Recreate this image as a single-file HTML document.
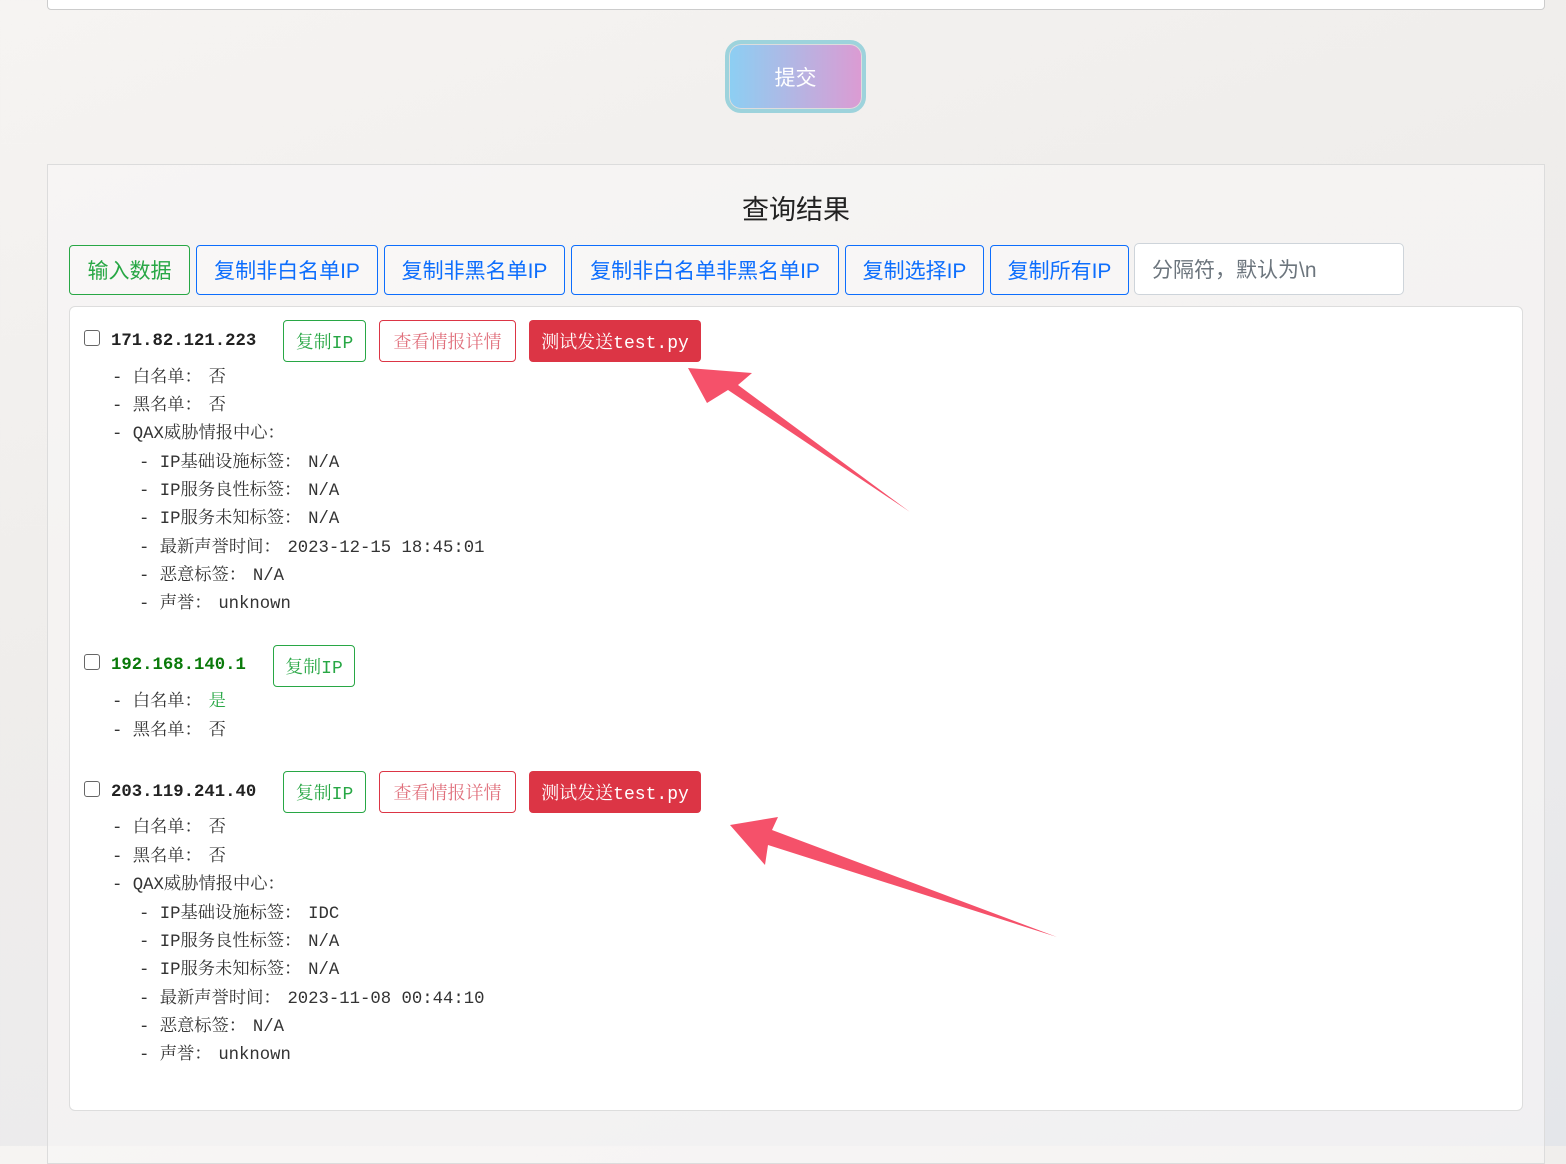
<!DOCTYPE html>
<html><head><meta charset="utf-8"><style>
*{box-sizing:border-box;margin:0;padding:0}
body{width:1566px;height:1146px;overflow:hidden;position:relative;background:linear-gradient(160deg,#f6f4f2 0%,#efedeb 40%,#ecebec 70%,#e4e6ea 100%);font-family:"Liberation Sans","Noto Sans CJK SC",sans-serif}
.a{position:absolute}
.ta{left:47px;top:-10px;width:1498px;height:20px;background:#fff;border:1px solid #ccc;border-radius:4px}
.sub{left:725px;top:40px;width:141px;height:73px;border-radius:16px;border:4px solid #9dd3dc;background:linear-gradient(90deg,#8ccff3,#dc9bd3);color:#fff;font-size:21px;display:flex;align-items:center;justify-content:center;box-shadow:inset 0 0 0 1px #ddd}
.panel{left:47px;top:164px;width:1498px;height:1000px;border:1px solid #dcdcdc;background:rgba(248,247,246,.6)}
.title{left:47px;width:1498px;top:188px;text-align:center;font-size:27px;color:#222}
.btn{position:absolute;top:245px;height:50px;border:1px solid #0d6efd;border-radius:4px;color:#0d6efd;font-size:21px;display:flex;align-items:center;justify-content:center;background:rgba(255,255,255,.3)}
.inp{left:1134px;top:243px;width:270px;height:52px;border:1px solid #ced4da;border-radius:5px;background:#fff;color:#6c757d;font-size:21px;padding-left:17px;line-height:54px}
.card{left:69px;top:306px;width:1454px;height:805px;background:#fff;border:1px solid #ddd;border-radius:6px}
.t{position:absolute;font-family:"Liberation Mono","Noto Serif CJK SC",monospace;font-size:17.3px;color:#333;white-space:pre;line-height:20px;margin-top:4px}
.c{display:inline-block;width:24px}
.ip{font-weight:bold;color:#222;margin-top:2px}
.cb{position:absolute;left:84px;width:16px;height:16px;border:1.5px solid #666;border-radius:3px;background:#fff}
.sb{position:absolute;height:42px;border-radius:4px;font-family:"Liberation Mono","Noto Serif CJK SC",monospace;font-size:18px;display:flex;align-items:center;justify-content:center}
.g{border:1px solid #28a745;color:#28a745}
.r{border:1px solid #dc3545;color:#e0707c}
.rf{background:#dc3545;color:#fff}
</style></head><body>
<div class="a ta"></div>
<div class="a sub">提交</div>
<div class="a panel"></div>
<div class="a title">查询结果</div>
<div class="btn" style="left:69px;width:121px;border-color:#28a745;color:#28a745">输入数据</div>
<div class="btn" style="left:196px;width:182px">复制非白名单IP</div>
<div class="btn" style="left:384px;width:181px">复制非黑名单IP</div>
<div class="btn" style="left:571px;width:268px">复制非白名单非黑名单IP</div>
<div class="btn" style="left:845px;width:139px">复制选择IP</div>
<div class="btn" style="left:990px;width:139px">复制所有IP</div>
<div class="a inp">分隔符，默认为\n</div>
<div class="a card"></div>

<div class="cb" style="top:330px"></div>
<div class="t ip" style="left:111px;top:330px">171.82.121.223</div>
<div class="sb g" style="left:283px;top:320px;width:83px">复制IP</div>
<div class="sb r" style="left:379px;top:320px;width:137px">查看情报详情</div>
<div class="sb rf" style="left:529px;top:320px;width:172px">测试发送test.py</div>
<div class="t" style="left:112px;top:365px">- 白名单<span class="c">：</span>否</div>
<div class="t" style="left:112px;top:393px">- 黑名单<span class="c">：</span>否</div>
<div class="t" style="left:112px;top:421px">- QAX威胁情报中心<span class="c">：</span></div>
<div class="t" style="left:139px;top:450px">- IP基础设施标签<span class="c">：</span>N/A</div>
<div class="t" style="left:139px;top:478px">- IP服务良性标签<span class="c">：</span>N/A</div>
<div class="t" style="left:139px;top:506px">- IP服务未知标签<span class="c">：</span>N/A</div>
<div class="t" style="left:139px;top:535px">- 最新声誉时间<span class="c">：</span>2023-12-15 18:45:01</div>
<div class="t" style="left:139px;top:563px">- 恶意标签<span class="c">：</span>N/A</div>
<div class="t" style="left:139px;top:591px">- 声誉<span class="c">：</span>unknown</div>

<div class="cb" style="top:654px"></div>
<div class="t ip" style="left:111px;top:654px;color:#0a7a0a">192.168.140.1</div>
<div class="sb g" style="left:273px;top:645px;width:82px">复制IP</div>
<div class="t" style="left:112px;top:689px">- 白名单<span class="c">：</span><span style="color:#28a745">是</span></div>
<div class="t" style="left:112px;top:718px">- 黑名单<span class="c">：</span>否</div>

<div class="cb" style="top:781px"></div>
<div class="t ip" style="left:111px;top:781px">203.119.241.40</div>
<div class="sb g" style="left:283px;top:771px;width:83px">复制IP</div>
<div class="sb r" style="left:379px;top:771px;width:137px">查看情报详情</div>
<div class="sb rf" style="left:529px;top:771px;width:172px">测试发送test.py</div>
<div class="t" style="left:112px;top:815px">- 白名单<span class="c">：</span>否</div>
<div class="t" style="left:112px;top:844px">- 黑名单<span class="c">：</span>否</div>
<div class="t" style="left:112px;top:872px">- QAX威胁情报中心<span class="c">：</span></div>
<div class="t" style="left:139px;top:901px">- IP基础设施标签<span class="c">：</span>IDC</div>
<div class="t" style="left:139px;top:929px">- IP服务良性标签<span class="c">：</span>N/A</div>
<div class="t" style="left:139px;top:957px">- IP服务未知标签<span class="c">：</span>N/A</div>
<div class="t" style="left:139px;top:986px">- 最新声誉时间<span class="c">：</span>2023-11-08 00:44:10</div>
<div class="t" style="left:139px;top:1014px">- 恶意标签<span class="c">：</span>N/A</div>
<div class="t" style="left:139px;top:1042px">- 声誉<span class="c">：</span>unknown</div>

<svg class="a" style="left:0;top:0" width="1566" height="1146">
<polygon points="688,368 752,373 738,385 910,512 728,390 707,403" fill="#f5516a"/>
<polygon points="730,825 778,817 772,830 1057,937 768,845 765,865" fill="#f5516a"/>
</svg>
</body></html>
